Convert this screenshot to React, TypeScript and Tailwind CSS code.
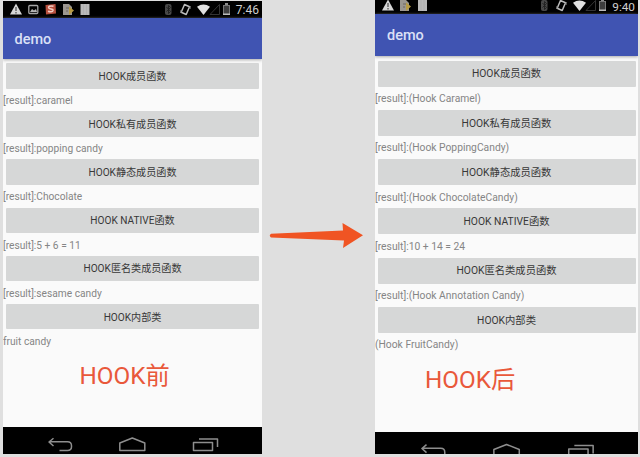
import React from 'react';

const font = "font-[Roboto,'Noto_Sans_CJK_SC',sans-serif]";

function StatusIcons({ image }: { image: boolean }) {
  return (
    <svg className="h-[17px] w-[90px] shrink-0" viewBox="0 0 90 17">
      <path d="M13 2.5 19 13.5H7Z" fill="#d6d6d6" />
      <path d="M13 6v4M13 11v1.5" stroke="#555" strokeWidth="1.3" />
      {image && (
        <g>
          <rect x="25.8" y="4.5" width="9" height="8" rx="1" fill="none" stroke="#a5a5a5" strokeWidth="1.3" />
          <path d="m27 11 2-3 2 1.5L33 8l1 3Z" fill="#b5b5b5" />
          <path d="m42.500 4 10-1 .5 9.500-10 1Z" fill="#b8503e" />
          <path d="M50.5 5.300c-3-1-6 .2-4.500 1.900 1 1 4.500.5 4 2.300-.5 1.500-3 1.500-5 .7" fill="none" stroke="#f3cfc6" strokeWidth="1.500" />
        </g>
      )}
      <g transform={image ? 'translate(60 0)' : 'translate(25 0)'}>
        <path d="M0 3h6l3 3v8H0Z" fill="#9b9690" />
        <path d="m6 5.500 5 4-5 4.500Z" fill="#b89b43" />
        <path d="M3 7h3M3 10h2" stroke="#6e6761" />
      </g>
      <g transform={image ? 'translate(77.500 0)' : 'translate(43 0)'}>
        <path d="M0 3h9v11H0Z" fill="#b9b9b9" />
        <path d="M3 3v11M6 3v11" stroke="#aaa" strokeWidth=".6" />
      </g>
    </svg>
  );
}

function SignalIcons() {
  return (
    <svg className="h-[17px] w-[68px] shrink-0" viewBox="0 0 68 17">
      <rect x="1" y="3" width="6.500" height="11" rx="2" fill="#484848" />
      <path d="m2.500 6 4 4.500-2 2V4.500l2 2-4 4" fill="none" stroke="#202020" strokeWidth=".9" />
      <path d="m20.500 3.500 5 2.200-3.300 7.800-5-2.200Z" fill="none" stroke="#bcbcbc" strokeWidth="1.500" strokeLinejoin="round" />
      <path d="m17 9-.2 3M26 8l.2-3" stroke="#888" />
      <path d="M33 5.800q6.500-4.500 13 0L39.500 14Z" fill="#e0e0e0" />
      <path d="M55.500 3.500v10H46Z" fill="none" stroke="#343434" />
      <rect x="59.500" y="4.500" width="6" height="9" fill="#3e3e3e" stroke="#777" />
      <path d="M61 3h3M59 13.300h7" stroke="#bbb" strokeWidth="1.400" />
    </svg>
  );
}

function NavIcons({ wide }: { wide: boolean }) {
  return (
    <svg className={wide ? 'h-[22px] w-[263px]' : 'h-[27px] w-[259px]'} viewBox={wide ? '0 0 263 22' : '0 0 259 27'}>
      <g fill="none" stroke="#8e8e8e" strokeWidth="1.500" strokeLinejoin="round" transform={wide ? 'translate(.2 1.300) scale(1.016)' : undefined}>
        <path d="M50.500 11.200 46 15l4.500 4M46.500 14.800h18q4 0 4 4v1q0 3.700-4 3.700h-8" />
        <path d="m116.800 16 12.500-5 12.500 5v7.500h-25Z" />
        <path d="M190.500 15.500h19v8h-19ZM196 12h18.500v8" />
      </g>
    </svg>
  );
}

const titles = ['HOOK成员函数', 'HOOK私有成员函数', 'HOOK静态成员函数', 'HOOK NATIVE函数', 'HOOK匿名类成员函数', 'HOOK内部类'];
const before = ['[result]:caramel', '[result]:popping candy', '[result]:Chocolate', '[result]:5 + 6 = 11', '[result]:sesame candy', 'fruit candy'];
const after = ['[result]:(Hook Caramel)', '[result]:(Hook PoppingCandy)', '[result]:(Hook ChocolateCandy)', '[result]:10 + 14 = 24', '[result]:(Hook Annotation Candy)', '(Hook FruitCandy)'];

function Phone({ results, time, caption, wide }: { results: string[]; time: string; caption: string; wide: boolean }) {
  return (
    <section className={wide ? 'flex h-[454px] w-[263px] shrink-0 flex-col overflow-hidden bg-[#fafafa]' : 'mt-px flex h-[453px] w-[259px] shrink-0 flex-col overflow-hidden bg-[#fafafa]'}>
      <header className={wide ? 'flex h-[14px] shrink-0 items-end overflow-hidden bg-black pr-[3px]' : 'flex h-[17px] shrink-0 items-center bg-black pr-[3px]'}>
        <div className="flex w-full items-center justify-between">
          <StatusIcons image={!wide} />
          <div className="flex items-center gap-[3px]">
            <SignalIcons />
            <span className={wide ? 'mt-[3px] w-[24px] whitespace-nowrap text-right text-[11.800px] leading-[14px] text-[#cfcfcf]' : 'w-[24px] whitespace-nowrap text-right text-[12px] leading-[14px] text-[#cfcfcf]'}>{time}</span>
          </div>
        </div>
      </header>
      <div className={wide ? 'z-10 flex h-[42px] shrink-0 items-center bg-[#4054b2] pl-[12px] pt-px text-[14.500px] font-medium text-[#dbe0f6] shadow-[0_1px_3px_#aaa]' : 'z-10 flex h-[41px] shrink-0 items-center bg-[#4054b2] pl-[11.500px] pt-[2px] text-[14.500px] font-medium text-[#dbe0f6] shadow-[0_1px_3px_#aaa]'}>demo</div>
      <main className={wide ? 'flex h-[376px] shrink-0 flex-col pt-[4.500px]' : 'flex h-[368px] shrink-0 flex-col pt-[4px]'}>
        {titles.map((title, i) => (
          <div key={title} className={wide ? 'h-[49.300px] shrink-0' : 'h-[48.200px] shrink-0'}>
            <button className={wide ? 'mx-auto flex h-[26px] w-[258px] items-center justify-center rounded-[1px] bg-[#d6d7d7] pt-px text-[10.300px] text-[#383838]' : 'mx-auto flex h-[25.500px] w-[253px] items-center justify-center rounded-[1px] bg-[#d6d7d7] pt-px text-[10.100px] text-[#383838]'}>{title}</button>
            <div className={wide ? 'whitespace-nowrap pt-[4.500px] text-[10.300px] leading-[16px] text-[#858585]' : 'whitespace-nowrap pt-[4.500px] text-[10.200px] leading-[16px] text-[#858585]'}>{results[i]}</div>
          </div>
        ))}
        <div className={wide ? 'pl-[50px] pt-[7px] text-[24.300px] leading-[34px] text-[#e9583a]' : 'pl-[76.500px] pt-[7px] text-[24.300px] leading-[34px] text-[#e9583a]'}>{caption}</div>
      </main>
      <footer className="flex-1 overflow-hidden bg-black">
        <NavIcons wide={wide} />
      </footer>
    </section>
  );
}

export default function App() {
  return (
    <div className={`flex h-[457px] w-[640px] overflow-hidden bg-[#dfdfdf] pl-[3px] ${font}`}>
      <Phone results={before} time="7:46" caption="HOOK前" wide={false} />
      <div className="flex w-[113px] shrink-0 items-start pt-[220px]">
        <svg className="h-[32px] w-[113px]" viewBox="0 0 113 32">
          <path d="M9 13.700 81 10.500 80.500 3 101 15.300 81 28 82 20.500 9 17.500Q6.500 15.500 9 13.700Z" fill="#f05423" />
        </svg>
      </div>
      <Phone results={after} time="9:40" caption="HOOK后" wide />
    </div>
  );
}
